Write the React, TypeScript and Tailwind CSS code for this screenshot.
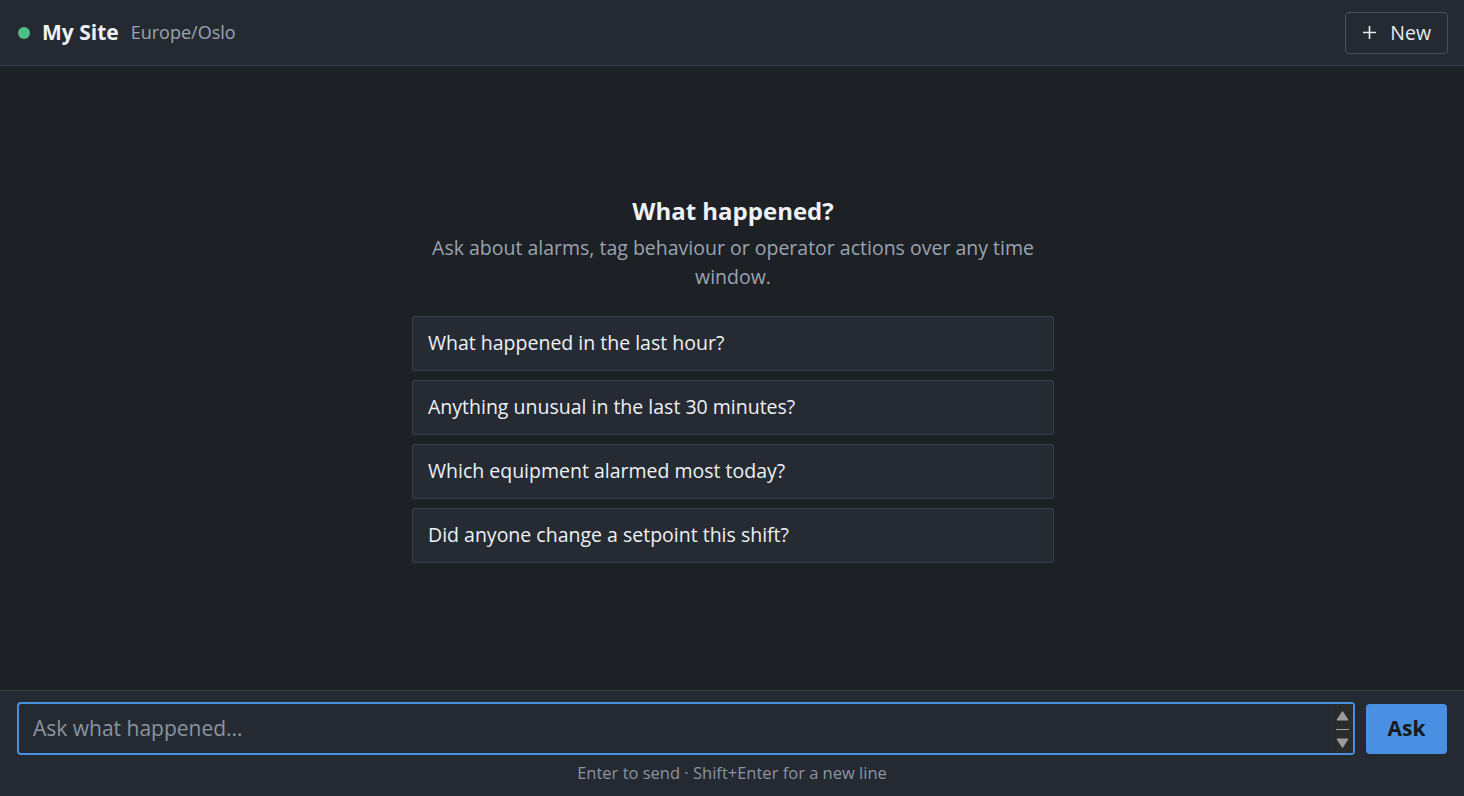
import React from "react";

const suggestions = [
  "What happened in the last hour?",
  "Anything unusual in the last 30 minutes?",
  "Which equipment alarmed most today?",
  "Did anyone change a setpoint this shift?",
];

// Dark native-style scrollbar strip shown at the right edge of the input
function ScrollStrip() {
  return (
    <div className="absolute right-[2px] top-[2px] bottom-[2px] w-[22px] bg-[#2a2b2d] flex flex-col items-center justify-between pt-[6px] pb-[4px] pointer-events-none">
      <svg width="13" height="11" viewBox="0 0 13 11">
        <path d="M6.5 1.5 L12 10 L1 10 Z" fill="#9c9c9c" stroke="#9c9c9c" strokeLinejoin="round" strokeWidth="1" />
      </svg>
      <div className="w-[13px] h-[1px] bg-[#a3a3a3]" />
      <svg width="13" height="11" viewBox="0 0 13 11">
        <path d="M1 1 L12 1 L6.5 9.5 Z" fill="#9c9c9c" stroke="#9c9c9c" strokeLinejoin="round" strokeWidth="1" />
      </svg>
    </div>
  );
}

export default function App() {
  return (
    <div
      className="flex flex-col h-screen w-full bg-[#1d2025] text-[#e6e9ee] overflow-hidden"
      style={{ fontFamily: '"Open Sans", "Noto Sans", sans-serif' }}
    >
      <header className="flex items-center justify-between h-[66px] px-[18px] bg-[#252a32] border-b border-[#3a3f47] shrink-0">
        <div className="flex items-center">
          <span className="w-[12px] h-[12px] rounded-full bg-[#4cbf85]" />
          <span className="ml-[12px] text-[21px] font-bold text-[#eef1f5]">My Site</span>
          <span className="ml-[12px] text-[18px] text-[#9aa4b1]">Europe/Oslo</span>
        </div>
        <button className="flex items-center gap-[13px] h-[42px] pl-[16px] pr-[16px] -mr-[2px] border border-[#4a5059] rounded-[4px] text-[19.5px] text-[#e6e9ee]">
          <svg width="15" height="15" viewBox="0 0 15 15" fill="none" stroke="currentColor" strokeWidth="1.6">
            <path d="M7.5 1v13M1 7.5h13" />
          </svg>
          New
        </button>
      </header>

      <main className="flex-1 flex items-center justify-center">
        <div className="w-[642px] ml-[2px] flex flex-col items-center">
          <h1 className="text-[24px] leading-[33px] font-bold text-[#eef1f5]">What happened?</h1>
          <p className="mt-[6px] text-[19.5px] leading-[29px] text-[#9aa4b1] text-center px-[14px]">
            Ask about alarms, tag behaviour or operator actions over any time window.
          </p>
          <div className="mt-[25px] w-full flex flex-col gap-[9px]">
            {suggestions.map((s) => (
              <button
                key={s}
                className="h-[55px] w-full text-left px-[15px] bg-[#262b33] border border-[#3a3f47] rounded-[2px] text-[19.5px] text-[#eef1f5]"
              >
                {s}
              </button>
            ))}
          </div>
        </div>
      </main>

      <footer className="shrink-0 bg-[#252a32] border-t border-[#3a3f47] pl-[17px] pr-[17px] pt-[11px] pb-[11px]">
        <div className="flex items-center gap-[11px]">
          <div className="relative flex-1">
            <textarea
              autoFocus
              rows={1}
              placeholder="Ask what happened..."
              className="block w-full h-[53px] resize-none overflow-hidden bg-[#252a32] border-2 border-[#4a90e2] rounded-[4px] pl-[14px] pr-[30px] py-[9px] text-[21px] leading-[31px] text-[#e6e9ee] caret-[#e6e9ee] placeholder:text-[#8a94a1] outline-none"
            />
            <ScrollStrip />
          </div>
          <button className="w-[81px] h-[50px] rounded-[4px] bg-[#4a90e2] text-[21px] font-bold text-[#16191d]">
            Ask
          </button>
        </div>
        <div className="mt-[6px] text-center text-[16.5px] leading-[24px] text-[#8a94a1]">
          Enter to send · Shift+Enter for a new line
        </div>
      </footer>
    </div>
  );
}
